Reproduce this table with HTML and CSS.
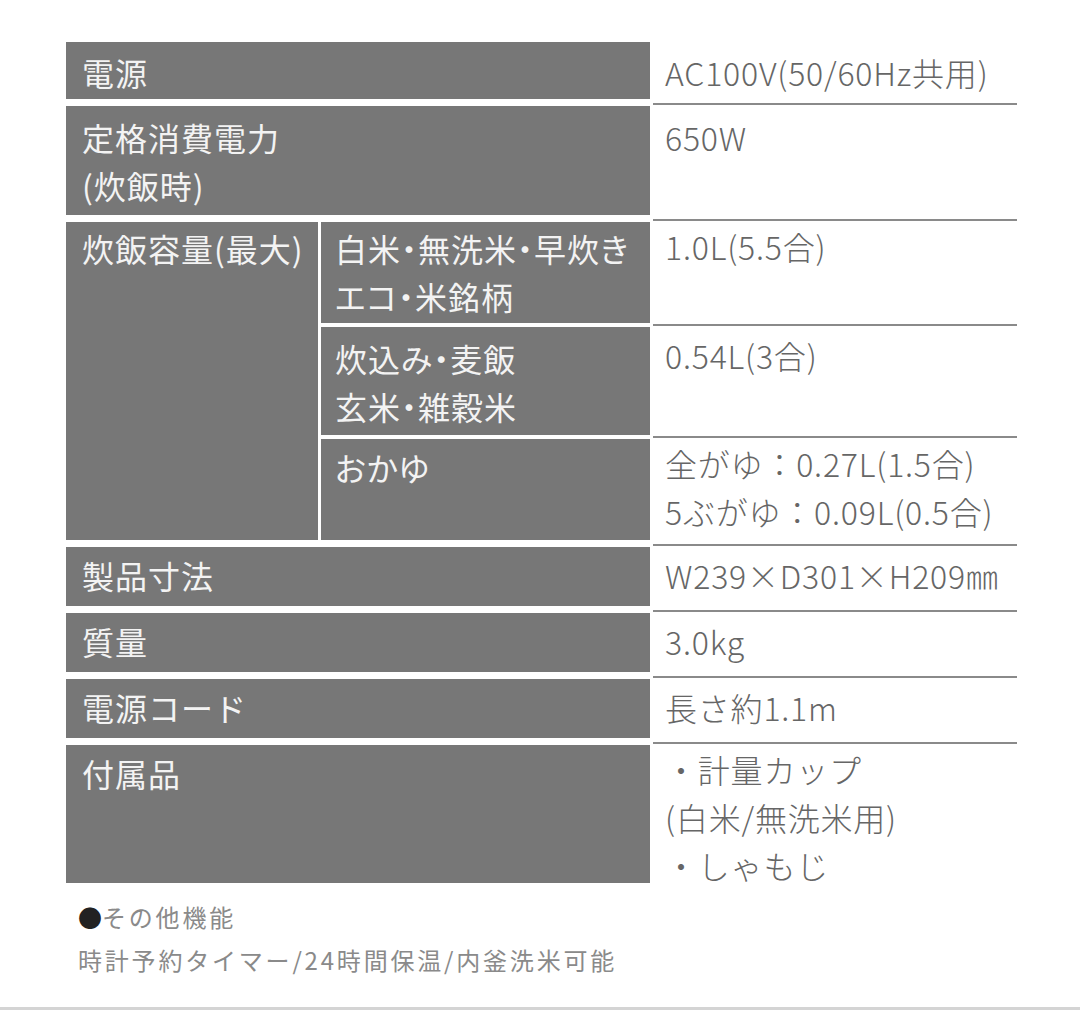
FILE: index.html
```html
<!DOCTYPE html>
<html lang="ja">
<head>
<meta charset="utf-8">
<title>仕様</title>
<link rel="stylesheet" href="styles.css">
</head>
<body>
<div class="page">
  <div class="spec">
    <div class="lbl wide low">電源</div>
    <div class="val low">AC100V(50/60Hz共用)</div>

    <div class="lbl wide lower">定格消費電力<br>(炊飯時)</div>
    <div class="val lower">650W</div>

    <div class="lbl main high">炊飯容量(最大)</div>
    <div class="lbl sub high">白米・無洗米・早炊き<br>エコ・米銘柄</div>
    <div class="val top">1.0L(5.5合)</div>
    <div class="lbl sub lower">炊込み・麦飯<br>玄米・雑穀米</div>
    <div class="val">0.54L(3合)</div>
    <div class="lbl sub last">おかゆ</div>
    <div class="val top">全がゆ：0.27L(1.5合)<br>5ぶがゆ：0.09L(0.5合)</div>

    <div class="lbl wide">製品寸法</div>
    <div class="val">W239×D301×H209㎜</div>

    <div class="lbl wide">質量</div>
    <div class="val">3.0kg</div>

    <div class="lbl wide">電源コード</div>
    <div class="val">長さ約1.1m</div>

    <div class="lbl wide end">付属品</div>
    <div class="val end top">・計量カップ<br>(白米/無洗米用)<br>・しゃもじ</div>
  </div>

  <div class="notes">
    <p class="note-title"><span class="dot">●</span>その他機能</p>
    <p class="note-body">時計予約タイマー/24時間保温/内釜洗米可能</p>
  </div>

  <div class="rule"></div>
</div>
</body>
</html>
```

FILE: styles.css
```css
html, body {
  margin: 0;
  padding: 0;
  background: #ffffff;
}

.page {
  width: 1080px;
  height: 1010px;
  display: flex;
  flex-direction: column;
  font-family: "Noto Sans CJK JP", "Noto Sans", sans-serif;
}

.spec {
  margin: 42px 0 0 66px;
  width: 951px;
  display: grid;
  grid-template-columns: 252px 329px 364px;
  grid-template-rows: 64px 116px 105px 112px 108px 66px 66px 66px 138px;
  column-gap: 3px;
  font-size: 32px;
  line-height: 48px;
}

.lbl {
  background: #777777;
  color: #f3f3f3;
  margin-bottom: 7px;
  padding: 4px 0 0 16px;
  letter-spacing: 1px;
}

.lbl.wide {
  grid-column: 1 / 3;
}

.lbl.main {
  grid-column: 1;
  grid-row: span 3;
}

.lbl.sub {
  grid-column: 2;
  margin-bottom: 4px;
  padding-left: 14px;
  font-feature-settings: "palt";
}

.lbl.sub.last {
  margin-bottom: 7px;
}

.lbl.end {
  margin-bottom: 0;
}

.val {
  grid-column: 3;
  color: #666666;
  font-weight: 300;
  letter-spacing: 0.8px;
  padding: 4px 0 0 12px;
  border-bottom: 2px solid #8a8a8a;
  margin-bottom: 1px;
}

.val.end {
  border-bottom: none;
  margin-bottom: 0;
}

.top {
  padding-top: 0;
}

.high {
  padding-top: 2px;
}

.low {
  padding-top: 6px;
}

.lower {
  padding-top: 7px;
}

.notes {
  margin: 12px 0 0 78px;
  font-size: 24px;
  line-height: 43px;
  color: #8a8a8a;
  letter-spacing: 2.8px;
}

.notes p {
  margin: 0;
}

.dot {
  color: #222222;
  letter-spacing: 0;
}

.rule {
  margin-top: auto;
  height: 3px;
  background: #d4d4d4;
}
```
